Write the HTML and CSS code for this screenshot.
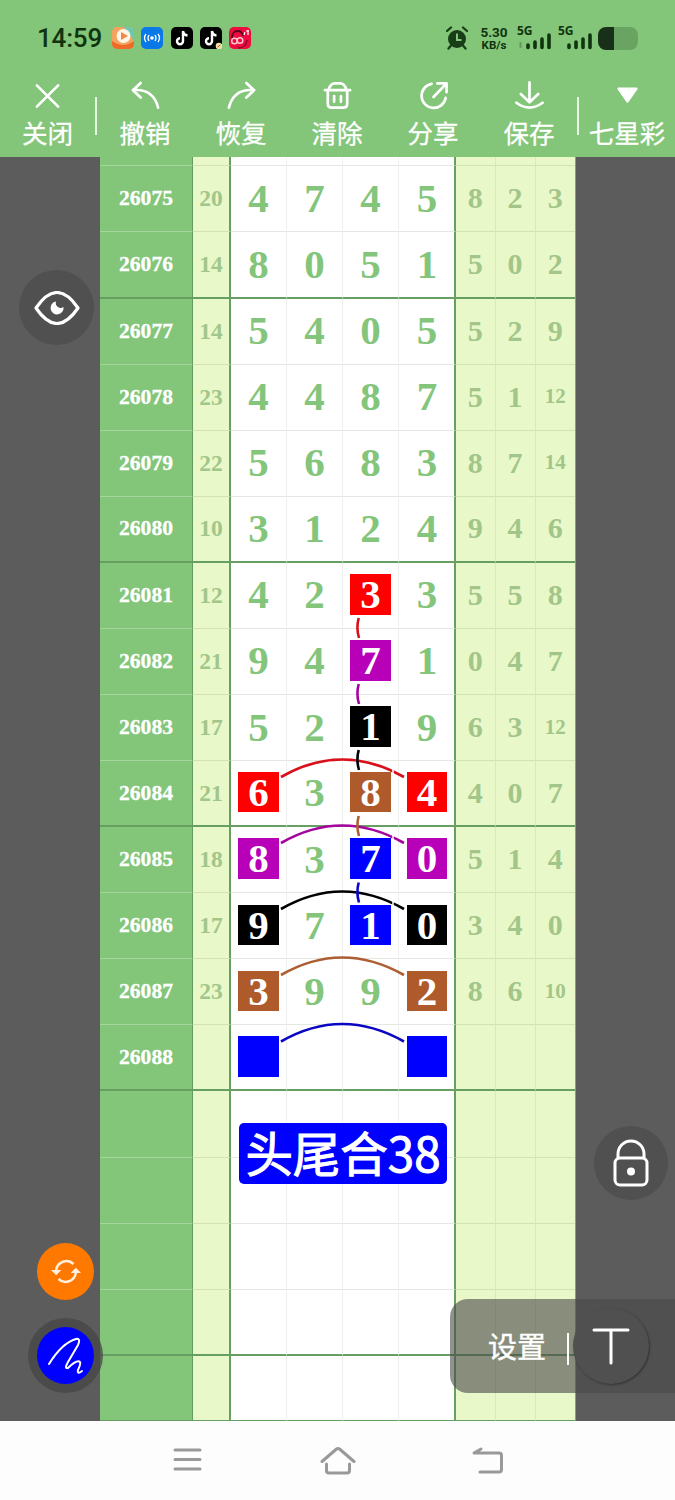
FILE: index.html
```
<!DOCTYPE html>
<html lang="zh-CN">
<head>
    <meta charset="UTF-8">
    <meta name="viewport" content="width=device-width, initial-scale=1.0">
    <title>七星彩</title>
    <link rel="stylesheet" href="styles.css">
</head>
<body>
    <header class="top">
        <div class="status">
            <span class="clock">14:59</span>
            <div class="apps">
                <svg viewBox="0 0 22 22"><rect width="22" height="22" rx="5" fill="#f4a25d"/><path d="M12 0h5a5 5 0 0 1 5 5v9z" fill="#6cc9b0"/><path d="M0 14q11 8 22 0v3a5 5 0 0 1-5 5H5a5 5 0 0 1-5-5z" fill="#ef6a28"/><circle cx="11.500" cy="9" r="7" fill="#fff4e6"/><path d="M9 5l7 4-7 4z" fill="#f08a45"/></svg>
                <svg viewBox="0 0 22 22"><rect width="22" height="22" rx="5" fill="#0a78e6"/><circle cx="11" cy="11" r="1.800" fill="#fff"/><path d="M8 8q-2 3 0 6M14 8q2 3 0 6M5 7q-3 4 0 8M17 7q3 4 0 8" fill="none" stroke="#fff" stroke-width="1.300"/></svg>
                <svg viewBox="0 0 22 22"><rect width="22" height="22" rx="5" fill="#000"/><path d="M12 4v10.200a3 3 0 1 1-3-3M12 4q.5 4 4.500 4.500" fill="none" stroke="#fff" stroke-width="2.400"/></svg>
                <svg viewBox="0 0 22 22"><rect width="22" height="22" rx="5" fill="#000"/><path d="M12 4v10.200a3 3 0 1 1-3-3M12 4q.5 4 4.500 4.500" fill="none" stroke="#fff" stroke-width="2.400"/><circle cx="19" cy="19" r="3.300" fill="#f4e0a8"/><path d="M17.500 20l3-2" stroke="#a5603a"/></svg>
                <svg viewBox="0 0 22 22"><rect width="22" height="22" rx="5" fill="#ed0b40"/><path d="M3 11q0-7 6-7 4 0 5 5" fill="none" stroke="#5c0619" stroke-width="1.800"/><circle cx="5.500" cy="14" r="2.800" fill="none" stroke="#ffc7ce" stroke-width="1.500"/><circle cx="11" cy="13.500" r="2.800" fill="none" stroke="#ffc7ce" stroke-width="1.500"/><path d="M15 8l1-3M19 3v5M17 4h3" stroke="#fff" stroke-width="1.200"/><path d="M9 21q8 0 9-8" fill="none" stroke="#8c0a28" stroke-width="1.500"/></svg>
            </div>
            <svg class="alarm" viewBox="0 0 22 24"><circle cx="11" cy="13" r="9" fill="#183d17"/><path d="M1 5l4-3.500M21 5l-4-3.500M5 19.500L2.500 22.500M17 19.500l2.500 3" stroke="#183d17" stroke-width="2.300" stroke-linecap="round"/><path d="M11 7.500V14h4.500" fill="none" stroke="#83c579" stroke-width="2"/></svg>
            <div class="speed"><span>5.30</span><span>KB/s</span></div>
            <div class="signal">
                <span>5G</span>
                <svg viewBox="0 0 34 24"><path d="M3.500 16v6" stroke="#5f9c58" stroke-width="2"/><path d="M11 19v2.500M18 16v5.500M25 13v8.500M32 9v12.500" stroke="#10340f" stroke-width="3.600" stroke-linecap="round"/></svg>
            </div>
            <div class="signal">
                <span>5G</span>
                <svg viewBox="0 0 34 24"><path d="M11 19v2.500M18 16v5.500M25 13v8.500M32 9v12.500" stroke="#10340f" stroke-width="3.600" stroke-linecap="round"/></svg>
            </div>
            <div class="battery"></div>
        </div>
        <nav class="tools">
            <div class="tool"><svg viewBox="0 0 32 32"><path d="M5 5l22 22M27 5L5 27"/></svg><span>关闭</span></div>
            <div class="divider"></div>
            <div class="tool"><svg viewBox="0 0 32 32"><path d="M11 2.500L3 10l8 7.500M3 10q21-2 26 18"/></svg><span>撤销</span></div>
            <div class="tool"><svg viewBox="0 0 32 32"><path d="M21 2.500l8 7.500-8 7.500M29 10Q8 8 3 28"/></svg><span>恢复</span></div>
            <div class="tool"><svg viewBox="0 0 32 32"><path d="M3 10h26M6 10v14q0 4 4 4h12q4 0 4-4V10M7 9q2-6 6-6h6q4 0 6 6M12.500 16v6M19.500 16v6"/></svg><span>清除</span></div>
            <div class="tool"><svg viewBox="0 0 32 32"><path d="M14 3.500A12.500 12.500 0 1 0 28.500 18M16 17L29 3.500M20 3h9.500v9"/></svg><span>分享</span></div>
            <div class="tool"><svg viewBox="0 0 32 32"><path d="M16 2v20M7 14l9 8.500 9-8.500M2.500 23q13.500 10 27 0"/></svg><span>保存</span></div>
            <div class="divider"></div>
            <div class="tool"><svg viewBox="0 0 32 32"><path class="solid" d="M7 8.500h18l-9 13z"/></svg><span>七星彩</span></div>
        </nav>
    </header>

    <main class="stage">
        <div class="board">
            <div class="row first"><b></b><em></em><i></i><i></i><i></i><i></i><u></u><u></u><u></u></div>
            <div class="row"><b>26075</b><em>20</em><i>4</i><i>7</i><i>4</i><i>5</i><u>8</u><u>2</u><u>3</u></div>
            <div class="row thick"><b>26076</b><em>14</em><i>8</i><i>0</i><i>5</i><i>1</i><u>5</u><u>0</u><u>2</u></div>
            <div class="row"><b>26077</b><em>14</em><i>5</i><i>4</i><i>0</i><i>5</i><u>5</u><u>2</u><u>9</u></div>
            <div class="row"><b>26078</b><em>23</em><i>4</i><i>4</i><i>8</i><i>7</i><u>5</u><u>1</u><u class="small">12</u></div>
            <div class="row"><b>26079</b><em>22</em><i>5</i><i>6</i><i>8</i><i>3</i><u>8</u><u>7</u><u class="small">14</u></div>
            <div class="row thick"><b>26080</b><em>10</em><i>3</i><i>1</i><i>2</i><i>4</i><u>9</u><u>4</u><u>6</u></div>
            <div class="row"><b>26081</b><em>12</em><i>4</i><i>2</i><i><span class="mark red">3</span></i><i>3</i><u>5</u><u>5</u><u>8</u></div>
            <div class="row"><b>26082</b><em>21</em><i>9</i><i>4</i><i><span class="mark purple">7</span></i><i>1</i><u>0</u><u>4</u><u>7</u></div>
            <div class="row"><b>26083</b><em>17</em><i>5</i><i>2</i><i><span class="mark black">1</span></i><i>9</i><u>6</u><u>3</u><u class="small">12</u></div>
            <div class="row thick"><b>26084</b><em>21</em><i><span class="mark red">6</span></i><i>3</i><i><span class="mark brown">8</span></i><i><span class="mark red">4</span></i><u>4</u><u>0</u><u>7</u></div>
            <div class="row"><b>26085</b><em>18</em><i><span class="mark purple">8</span></i><i>3</i><i><span class="mark blue">7</span></i><i><span class="mark purple">0</span></i><u>5</u><u>1</u><u>4</u></div>
            <div class="row"><b>26086</b><em>17</em><i><span class="mark black">9</span></i><i>7</i><i><span class="mark blue">1</span></i><i><span class="mark black">0</span></i><u>3</u><u>4</u><u>0</u></div>
            <div class="row"><b>26087</b><em>23</em><i><span class="mark brown">3</span></i><i>9</i><i>9</i><i><span class="mark brown">2</span></i><u>8</u><u>6</u><u class="small">10</u></div>
            <div class="row thick"><b>26088</b><em></em><i><span class="mark blue"></span></i><i></i><i></i><i><span class="mark blue"></span></i><u></u><u></u><u></u></div>
            <div class="row"><b></b><em></em><i></i><i></i><i></i><i></i><u></u><u></u><u></u></div>
            <div class="row"><b></b><em></em><i></i><i></i><i></i><i></i><u></u><u></u><u></u></div>
            <div class="row"><b></b><em></em><i></i><i></i><i></i><i></i><u></u><u></u><u></u></div>
            <div class="row thick"><b></b><em></em><i></i><i></i><i></i><i></i><u></u><u></u><u></u></div>
            <div class="row last"><b></b><em></em><i></i><i></i><i></i><i></i><u></u><u></u><u></u></div>

            <!-- hand drawn links between the marked numbers -->
            <svg class="links" viewBox="100 157 476 1264">
                <path stroke="#d9101c" d="M281 777Q342 742 404 777"/>
                <path stroke="#a5059f" d="M281 843Q342 808 404 843"/>
                <path stroke="#000" d="M281 909Q342 874 404 909"/>
                <path stroke="#ae5e33" d="M281 975Q342 940 404 975"/>
                <path stroke="#0b06c4" d="M281 1041.500Q342 1006.500 404 1041.500"/>
                <path stroke="#fff" stroke-width="1.500" d="M393 768v6M393 834v6M393 900v6"/>
                <path stroke="#d9101c" d="M358.700 618Q356 628 359 638"/>
                <path stroke="#a5059f" d="M358.700 684Q356 694 359 704"/>
                <path stroke="#000" d="M358.700 750Q356 760 359 770"/>
                <path stroke="#ae5e33" d="M358.700 816Q356 826 359 836"/>
                <path stroke="#0b06c4" d="M358.700 882.500Q356 892.500 359 902.500"/>
            </svg>
            <div class="note">头尾合38</div>
        </div>

        <div class="float eye"><svg viewBox="0 0 46 34"><path d="M2 17Q23-14 44 17Q23 48 2 17z" fill="none" stroke="#fff" stroke-width="3.200" stroke-linejoin="round"/><path d="M22 10.500A6.500 6.500 0 1 0 29.500 16q-3 2-5.500 0-3-2-2-5.500z" fill="#fff"/></svg></div>
        <div class="float lock"><svg viewBox="0 0 38 50"><rect x="3" y="20" width="32" height="27" rx="5"/><path d="M6 20v-4a13 13 0 0 1 26 0v4"/><circle cx="19" cy="33.500" r="4" fill="#fff" stroke="none"/></svg></div>
        <div class="float swap"><svg viewBox="0 0 32 28"><path d="M5.500 12.500A11 11 0 0 1 24 6M26.500 15.500A11 11 0 0 1 8 22"/><path class="tip" d="M0 12.500h11l-5.500 5.500zM21 15.500h11L26.500 10z"/></svg></div>
        <div class="float pen"><div class="pen-inner"><svg viewBox="0 0 36 38"><path d="M1 27Q14 6 28 2q5-1 2 6L20 25q-4 7 0 6 9-9 12-6 1 2-2 8-1 5 4 1"/></svg></div></div>
        <div class="panel">
            <span>设置</span>
            <div class="bar"></div>
            <div class="text-tool"><svg viewBox="0 0 38 38"><path d="M2 3h34M19 3v33"/></svg></div>
        </div>
    </main>

    <footer class="navbar">
        <svg viewBox="0 0 36 30"><path d="M5 4h25M5 13.500h25M5 23h25"/></svg>
        <svg viewBox="0 0 36 30"><path d="M6.500 18v6.500q0 2.500 2.500 2.500h18q2.500 0 2.500-2.500V18M2 15.500L16.500 3q1.500-1 3 0L34 15.500"/></svg>
        <svg viewBox="0 0 36 30"><path d="M11 3L4 7h25q2.500 0 2.500 2.500v14q0 2.500-2.500 2.500H10"/></svg>
    </footer>
</body>
</html>
```
FILE: styles.css
```
* {
    margin: 0;
    padding: 0;
    box-sizing: border-box;
}

body {
    width: 675px;
    height: 1500px;
    overflow: hidden;
    background: #fdfdfd;
    font-family: 'Noto Sans CJK SC', sans-serif;
    color: white;
}

svg {
    display: block;
}

/* top bar */
.top {
    height: 157px;
    background: #83c579;
}

.status {
    height: 76px;
    padding-left: 37px;
    display: flex;
    align-items: center;
    color: #10340f;
    font-family: 'Noto Sans', sans-serif;
}

.clock {
    width: 75px;
    font-family: Roboto, sans-serif;
    font-weight: 500;
    font-size: 26px;
    letter-spacing: -0.2px;
}

.apps {
    display: flex;
    gap: 7.3px;
    width: 334px;
}

.apps svg {
    width: 22px;
    height: 22px;
}

.alarm {
    width: 22px;
    height: 24px;
}

.speed {
    width: 32px;
    margin-left: 10px;
    display: flex;
    flex-direction: column;
    align-items: center;
    font-family: Roboto, sans-serif;
    font-weight: 700;
    font-size: 13.5px;
    line-height: 14px;
}

.speed span:last-child {
    font-size: 11.5px;
    line-height: 13px;
}

.signal {
    position: relative;
    width: 34px;
    margin-left: 7px;
}

.signal svg {
    width: 34px;
    height: 24px;
}

.signal span {
    position: absolute;
    left: 0;
    top: -1px;
    font-size: 12px;
    line-height: 12px;
    font-weight: 700;
}

.battery {
    width: 40px;
    height: 23px;
    margin-left: 6px;
    border-radius: 8px;
    background: linear-gradient(90deg, #183018 40%, #6aa462 40%);
}

.tools {
    display: flex;
    height: 81px;
}

.tool {
    width: 96px;
    padding-top: 4px;
    display: flex;
    flex-direction: column;
    align-items: center;
    font-size: 25.5px;
    line-height: 36px;
    white-space: nowrap;
}

.tool:first-child {
    width: 95px;
}

.tool svg {
    width: 31px;
    height: 32px;
    margin-bottom: 2px;
    fill: none;
    stroke: white;
    stroke-width: 2.8;
    stroke-linecap: round;
    stroke-linejoin: round;
}

.tool span {
    -webkit-text-stroke: 0.3px white;
}

.tool .solid {
    fill: white;
}

.divider {
    width: 2px;
    height: 38px;
    margin-top: 21px;
    background: #e8f6e4;
}

/* chart */
.stage {
    position: relative;
    height: 1264px;
    background: #5c5c5c;
}

.board {
    position: relative;
    width: 476px;
    height: 1264px;
    margin-left: 100px;
    display: flex;
    flex-direction: column;
    background: white;
    border-right: 1px solid #79aa69;
}

.row {
    flex: none;
    display: grid;
    grid-template-columns: 93px 38px 56px 56px 56px 57px 39.5px 40px 1fr;
    height: 66.08px;
    font-family: 'Liberation Serif', serif;
    font-weight: 700;
}

.row > * {
    display: flex;
    align-items: center;
    justify-content: center;
    font-style: normal;
    font-weight: 700;
    text-decoration: none;
    border-bottom: 1px solid #e3e9e1;
}

.row b {
    background: #83c579;
    border-right: 1px solid #629c5c;
    border-bottom-color: #a5d69c;
    font-size: 21.6px;
    -webkit-text-stroke: 0.3px white;
}

.row em {
    background: #e9f8c8;
    border-right: 2px solid #679f62;
    border-bottom-color: #d2e2b6;
    font-size: 23.5px;
    color: #a2c68a;
}

.row i {
    border-right: 1px solid #eef1ed;
    padding-bottom: 2px;
    font-size: 41px;
    color: #83c57b;
}

.row i:nth-child(6) {
    border-right: 2px solid #679f62;
    padding-left: 1px;
}

.row u {
    background: #e9f8c8;
    border-right: 1px solid #d9e8bd;
    border-bottom-color: #d2e2b6;
    padding-bottom: 1px;
    font-size: 30px;
    color: #a2c68a;
}

.row u:last-child {
    border-right: none;
}

.row .small {
    font-size: 21px;
}

.row.first {
    height: 9.4px;
}

.row.thick > * {
    border-bottom: 2px solid #679f62;
}

.row.last {
    height: auto;
    flex: 1;
}

.row.last > * {
    border-bottom-color: #679f62;
}

.mark {
    width: 40.5px;
    height: 40.5px;
    line-height: 40.5px;
    text-align: center;
    color: white;
    box-shadow: 0 0 0 3px white;
}

.red { background: #fe0000; }
.purple { background: #b800b8; }
.black { background: #000; }
.brown { background: #ae5a2a; }
.blue { background: #0000fe; }

.links {
    position: absolute;
    left: 0;
    top: 0;
    width: 476px;
    height: 1264px;
    fill: none;
    stroke-width: 2.6;
}

.note {
    position: absolute;
    left: 139px;
    top: 966px;
    width: 208px;
    height: 61px;
    border-radius: 5px;
    background: #0000fe;
    font-size: 47.5px;
    line-height: 58px;
    text-align: center;
    white-space: nowrap;
    -webkit-text-stroke: 1px white;
}

/* floating buttons */
.float {
    position: absolute;
    display: flex;
    align-items: center;
    justify-content: center;
    border-radius: 50%;
}

.eye {
    left: 19px;
    top: 113px;
    width: 75px;
    height: 75px;
    background: #505050;
}

.eye svg {
    width: 46px;
    height: 34px;
}

.lock {
    left: 594px;
    top: 969px;
    width: 74px;
    height: 74px;
    background: #505050;
}

.lock svg {
    width: 38px;
    height: 50px;
    fill: none;
    stroke: white;
    stroke-width: 3;
}

.swap {
    left: 37px;
    top: 1086px;
    width: 57px;
    height: 57px;
    background: #ff7800;
}

.swap svg {
    width: 30px;
    height: 27px;
    fill: none;
    stroke: #fff1dd;
    stroke-width: 2.6;
}

.swap .tip {
    fill: #fff1dd;
    stroke: none;
}

.pen {
    left: 28px;
    top: 1161px;
    width: 75px;
    height: 75px;
    background: rgba(70, 70, 70, 0.75);
}

.pen-inner {
    width: 57px;
    height: 57px;
    border-radius: 50%;
    background: #0000fe;
    display: flex;
    align-items: center;
    justify-content: center;
}

.pen svg {
    width: 36px;
    height: 38px;
    fill: none;
    stroke: white;
    stroke-width: 2;
    stroke-linecap: round;
}

.panel {
    position: absolute;
    right: 0;
    top: 1142px;
    width: 225px;
    height: 94px;
    padding-left: 38px;
    display: flex;
    align-items: center;
    border-radius: 18px 0 0 18px;
    background: rgba(72, 72, 72, 0.6);
    font-size: 29px;
}

.panel span {
    margin-top: -2px;
    -webkit-text-stroke: 0.4px white;
}

.panel .bar {
    width: 2px;
    height: 32px;
    margin-left: 21px;
    margin-top: 6px;
    background: white;
}

.text-tool {
    width: 76px;
    height: 76px;
    margin-left: 4px;
    display: flex;
    align-items: center;
    justify-content: center;
    border-radius: 50%;
    background: #505050;
    box-shadow: 1px 1px 2px #333;
}

.text-tool svg {
    width: 38px;
    height: 38px;
    fill: none;
    stroke: white;
    stroke-width: 3;
    stroke-linecap: round;
}

/* system navigation */
.navbar {
    height: 79px;
    padding-left: 170px;
    display: flex;
    align-items: center;
    gap: 114px;
}

.navbar svg {
    width: 36px;
    height: 30px;
    margin-top: 1px;
    fill: none;
    stroke: #999;
    stroke-width: 3;
    stroke-linecap: round;
    stroke-linejoin: round;
}
```
